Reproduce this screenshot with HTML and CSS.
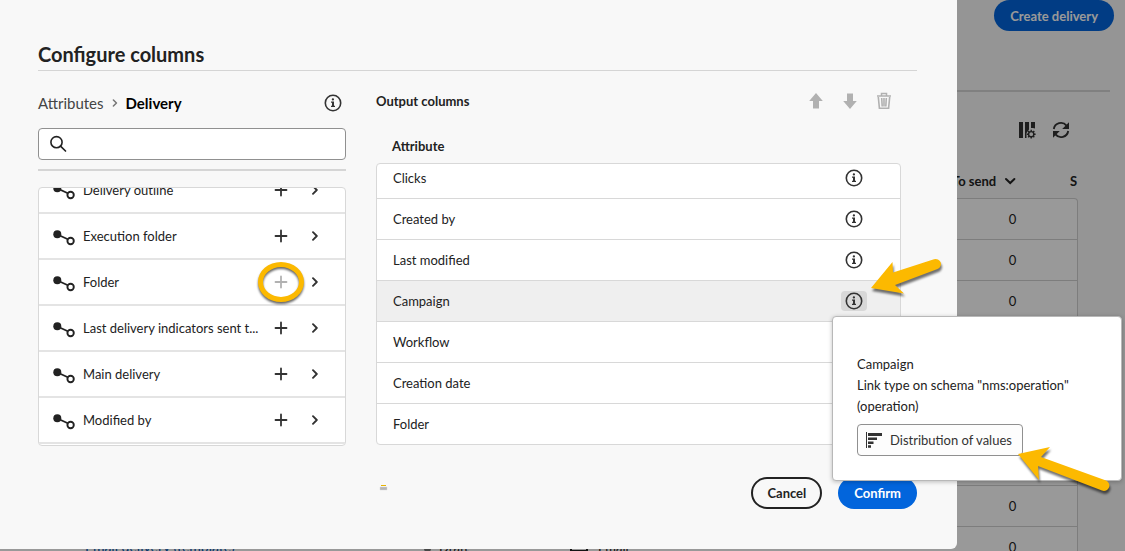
FILE: index.html
```
<!DOCTYPE html>
<html lang="en">
<head>
<meta charset="utf-8">
<title>Configure columns</title>
<meta name="viewport" content="width=device-width, initial-scale=1">
<link rel="stylesheet" href="styles.css">
</head>
<body>
<svg class="defs" aria-hidden="true">
  <symbol id="i-info" viewBox="0 0 18 18"><circle cx="9" cy="9" r="7.7" fill="none" stroke="currentColor" stroke-width="1.6"/><circle cx="8.9" cy="5.4" r="1.15" fill="currentColor"/><path d="M7 7.6h3v4.2h1v1.2H7v-1.2h1V8.800H7z" fill="currentColor"/></symbol>
  <symbol id="i-link" viewBox="0 0 22 16"><path d="M4.500 4.500 17.500 10.500" stroke="currentColor" stroke-width="1.8"/><circle cx="4.300" cy="4.300" r="4" fill="currentColor"/><circle cx="17.600" cy="11" r="3.200" fill="#fff" stroke="currentColor" stroke-width="1.900"/></symbol>
  <symbol id="i-plus" viewBox="0 0 14 14"><path d="M7 1.500v11M1.500 7h11" stroke="currentColor" stroke-width="1.800" stroke-linecap="round"/></symbol>
  <symbol id="i-chev" viewBox="0 0 10 10"><path d="M3 1.200 6.800 5 3 8.800" fill="none" stroke="currentColor" stroke-width="1.900" stroke-linecap="round" stroke-linejoin="round"/></symbol>
  <symbol id="i-up" viewBox="0 0 16 18"><path d="M8 1 14.800 9H11v7.500H5V9H1.200z" fill="currentColor"/></symbol>
</svg>

<div class="page">
  <header class="page-head"><button class="btn accent create">Create delivery</button></header>
  <hr class="page-rule">
  <div class="page-tools">
    <button class="icon-btn" aria-label="Configure columns"><svg width="18" height="18" viewBox="0 0 18 18"><path d="M1 1h4v16H1zM7 1h4v7.500L8.500 12v5H7zM13 1h4v6.500l-2-.5h-2z" fill="currentColor"/><circle cx="13.200" cy="13.200" r="2.600" fill="none" stroke="currentColor" stroke-width="1.400"/><path d="M13.200 8.800v1.800M13.200 15.800v1.800M8.800 13.200h1.800M15.800 13.200h1.800M10.100 10.100l1.200 1.200M15.100 15.100l1.200 1.200M10.100 16.300l1.200-1.200M15.100 11.300l1.200-1.200" stroke="currentColor" stroke-width="1.400"/></svg></button>
    <button class="icon-btn" aria-label="Refresh"><svg width="18" height="18" viewBox="0 0 18 18"><path d="M1.800 8A7.200 7.200 0 0 1 14.500 4.600M16.200 10A7.200 7.200 0 0 1 3.500 13.400" fill="none" stroke="currentColor" stroke-width="1.900"/><path d="M17 1.200V8h-6.800zM1 16.800V10h6.800z" fill="currentColor"/></svg></button>
  </div>
  <table class="grid">
    <thead><tr><th class="c-name"></th><th class="c-status"></th><th class="c-channel"></th><th class="c-send">To send <svg width="14" height="10" viewBox="0 0 14 10"><path d="M3 3l4.200 4L11.400 3" fill="none" stroke="currentColor" stroke-width="2" stroke-linecap="round"/></svg></th><th class="c-next">S</th></tr></thead>
    <tbody>
      <tr><td></td><td></td><td></td><td class="num">0</td></tr>
      <tr><td></td><td></td><td></td><td class="num">0</td></tr>
      <tr><td></td><td></td><td></td><td class="num">0</td></tr>
      <tr><td></td><td></td><td></td><td class="num"></td></tr>
      <tr><td></td><td></td><td></td><td class="num"></td></tr>
      <tr><td></td><td></td><td></td><td class="num"></td></tr>
      <tr><td></td><td></td><td></td><td class="num"></td></tr>
      <tr><td></td><td></td><td></td><td class="num">0</td></tr>
      <tr><td class="name"><a href="#">Email delivery (template)</a></td><td><span class="dot"></span>Draft</td><td><span class="mail"></span>Email</td><td class="num">0</td></tr>
    </tbody>
  </table>
</div>
<div class="backdrop"></div>

<section class="dialog" role="dialog" aria-labelledby="dlg-title">
  <h1 id="dlg-title">Configure columns</h1>
  <div class="cols">
    <div class="left">
      <div class="crumbs">
        <a href="#">Attributes</a>
        <svg class="sep" width="8" height="8"><use href="#i-chev"/></svg>
        <strong>Delivery</strong>
        <button class="icon-btn info" aria-label="Delivery information"><svg width="18" height="18"><use href="#i-info"/></svg></button>
      </div>
      <label class="search">
        <svg width="18" height="18" viewBox="0 0 18 18"><circle cx="7.500" cy="7.200" r="5.600" fill="none" stroke="currentColor" stroke-width="1.600"/><path d="M11.500 11.200 16.500 16" stroke="currentColor" stroke-width="1.700" stroke-linecap="round"/></svg>
        <input type="search" aria-label="Search attributes">
      </label>
      <hr class="left-rule">
      <div class="list">
        <ul>
          <li><svg class="link" width="22" height="16"><use href="#i-link"/></svg><span>Delivery outline</span><button class="icon-btn" aria-label="Add Delivery outline"><svg width="14" height="14"><use href="#i-plus"/></svg></button><button class="icon-btn" aria-label="Open Delivery outline"><svg width="10" height="10"><use href="#i-chev"/></svg></button></li>
          <li><svg class="link" width="22" height="16"><use href="#i-link"/></svg><span>Execution folder</span><button class="icon-btn" aria-label="Add Execution folder"><svg width="14" height="14"><use href="#i-plus"/></svg></button><button class="icon-btn" aria-label="Open Execution folder"><svg width="10" height="10"><use href="#i-chev"/></svg></button></li>
          <li><svg class="link" width="22" height="16"><use href="#i-link"/></svg><span>Folder</span><button class="icon-btn ringed" disabled aria-label="Add Folder"><svg width="14" height="14"><use href="#i-plus"/></svg></button><button class="icon-btn" aria-label="Open Folder"><svg width="10" height="10"><use href="#i-chev"/></svg></button></li>
          <li><svg class="link" width="22" height="16"><use href="#i-link"/></svg><span>Last delivery indicators sent t...</span><button class="icon-btn" aria-label="Add Last delivery indicators"><svg width="14" height="14"><use href="#i-plus"/></svg></button><button class="icon-btn" aria-label="Open Last delivery indicators"><svg width="10" height="10"><use href="#i-chev"/></svg></button></li>
          <li><svg class="link" width="22" height="16"><use href="#i-link"/></svg><span>Main delivery</span><button class="icon-btn" aria-label="Add Main delivery"><svg width="14" height="14"><use href="#i-plus"/></svg></button><button class="icon-btn" aria-label="Open Main delivery"><svg width="10" height="10"><use href="#i-chev"/></svg></button></li>
          <li><svg class="link" width="22" height="16"><use href="#i-link"/></svg><span>Modified by</span><button class="icon-btn" aria-label="Add Modified by"><svg width="14" height="14"><use href="#i-plus"/></svg></button><button class="icon-btn" aria-label="Open Modified by"><svg width="10" height="10"><use href="#i-chev"/></svg></button></li>
        </ul>
      </div>
    </div>

    <div class="right">
      <div class="right-head">
        <h2>Output columns</h2>
        <button class="icon-btn" disabled aria-label="Move up"><svg width="16" height="18"><use href="#i-up"/></svg></button>
        <button class="icon-btn" disabled aria-label="Move down"><svg class="flip" width="16" height="18"><use href="#i-up"/></svg></button>
        <button class="icon-btn" disabled aria-label="Delete"><svg width="16" height="18" viewBox="0 0 16 18"><path d="M1 4h14M5.500 3.500V1.500h5v2" fill="none" stroke="currentColor" stroke-width="1.500"/><path d="M2.300 5 3.400 16.200h9.200L13.700 5M5.700 6l.5 8.500M8 6v8.500M10.300 6l-.5 8.500" fill="none" stroke="currentColor" stroke-width="1.600"/></svg></button>
      </div>
      <h3 id="attr-head">Attribute</h3>
      <div class="out">
        <table aria-labelledby="attr-head">
          <tr><td>Clicks</td><td class="act"><button class="icon-btn" aria-label="Clicks information"><svg width="18" height="18"><use href="#i-info"/></svg></button></td></tr>
          <tr><td>Created by</td><td class="act"><button class="icon-btn" aria-label="Created by information"><svg width="18" height="18"><use href="#i-info"/></svg></button></td></tr>
          <tr><td>Last modified</td><td class="act"><button class="icon-btn" aria-label="Last modified information"><svg width="18" height="18"><use href="#i-info"/></svg></button></td></tr>
          <tr class="sel"><td>Campaign</td><td class="act"><button class="icon-btn on" aria-label="Campaign information"><svg width="18" height="18"><use href="#i-info"/></svg></button></td></tr>
          <tr><td>Workflow</td><td class="act"></td></tr>
          <tr><td>Creation date</td><td class="act"></td></tr>
          <tr><td>Folder</td><td class="act"></td></tr>
        </table>
      </div>
    </div>
  </div>
  <footer>
    <button class="btn outline">Cancel</button>
    <button class="btn accent">Confirm</button>
  </footer>

  <div class="popover">
    <p>Campaign<br>Link type on schema "nms:operation" (operation)</p>
    <button class="dist"><svg width="18" height="18" viewBox="0 0 18 18"><path d="M1.500 1v16" stroke="currentColor" stroke-width="1"/><path d="M3 2h14v3H3zM3 6.500h9v2.500H3zM3 10.500h5.500V13H3zM3 14.300h3v2.500H3z" fill="currentColor"/></svg>Distribution of values</button>
  </div>
  <svg class="arrow arrow-a" width="80" height="50" viewBox="0 0 80 50" aria-hidden="true"><path d="M4 34 25.500 8 26 18.500 67 5.200A5.200 5.200 0 0 1 70.500 15L28 31 37 39.500z"/></svg>
  <svg class="arrow arrow-b" width="106" height="56" viewBox="0 0 106 56" aria-hidden="true"><path d="M4 12 36 5 27 15 92 38.500A5.200 5.200 0 0 1 88 48.500L24 24 25 38z"/></svg>
  <span class="speck"></span>
</section>
</body>
</html>
```
FILE: styles.css
```
*, *::before, *::after { box-sizing: border-box; }
body {
  margin: 0;
  height: 100vh;
  overflow: hidden;
  position: relative;
  background: #f8f8f8;
  color: #222;
  font: 13px/20px Lato, "Noto Sans", sans-serif;
}
.defs { position: absolute; width: 0; height: 0; }
h1, h2, h3, p, ul { margin: 0; padding: 0; }
a { color: inherit; text-decoration: none; }
button { font: inherit; color: inherit; }
svg { display: block; }

.icon-btn {
  display: grid;
  place-items: center;
  padding: 0;
  border: 0;
  background: none;
  color: #333;
}
.icon-btn:disabled { color: #b1b1b1; }
.btn {
  height: 32px;
  padding: 0 16px;
  border: 0;
  border-radius: 16px;
  font-weight: 700;
}
.accent { background: #0265dc; color: #fff; }
.outline { padding: 0 14px; border: 2px solid #222; background: #f8f8f8; }

/* Page under the dialog */
.page-head { display: flex; justify-content: flex-end; padding: 0 11px 0 0; }
.create { height: 31px; }
.page-rule { height: 2px; margin: 59px 15px 0 0; border: 0; background: #d5d5d5; }
.page-tools {
  display: flex;
  justify-content: flex-end;
  gap: 16px;
  padding: 29px 55px 0 0;
}
.grid {
  width: calc(100% - 47px);
  margin-top: 25px;
  border-spacing: 0;
  table-layout: fixed;
}
.grid th { height: 34px; padding: 0; text-align: left; white-space: nowrap; font-weight: 700; }
.grid .c-send { width: 130px; padding-left: 4px; }
.grid th svg { display: inline-block; margin-left: 4px; }
.grid td {
  height: 41px;
  padding: 0;
  border-bottom: 1px solid #d0d0d0;
  background: #fff;
}
.grid tbody tr:first-child td { height: 42px; border-top: 1px solid #d0d0d0; }
.grid .num { border-right: 1px solid #d0d0d0; text-align: center; }
.grid tr:first-child .num { border-top-right-radius: 4px; }
.c-name { width: 424px; }
.c-status { width: 146px; }
.grid .c-next { width: 0; text-indent: -8px; }
.grid .name { padding-left: 85px; font-size: 14px; color: #0054b6; }
.dot { display: inline-block; width: 7px; height: 7px; margin-right: 8px; border-radius: 50%; background: #777; }
.mail { display: inline-block; width: 18px; height: 12px; margin-right: 10px; border: 2px solid #222; }
.backdrop { position: absolute; inset: 0; background: rgba(0, 0, 0, .4); }

/* Dialog */
.dialog {
  position: absolute;
  top: 0;
  left: 0;
  width: calc(100% - 168px);
  padding: 41px 40px 40px 38px;
  border-radius: 0 0 6px 0;
  background: #f8f8f8;
}
h1 {
  padding-bottom: 3px;
  border-bottom: 1px solid #d5d5d5;
  font-size: 20px;
  line-height: 26px;
}
.cols {
  display: grid;
  grid-template-columns: 308px 1fr;
  gap: 30px;
  padding: 20px 16px 0 0;
}
.crumbs { display: flex; align-items: center; height: 24px; font-size: 15px; color: #444; }
.sep { margin: 0 7px; color: #777; }
.crumbs strong { color: #000; }
.info { margin-left: auto; margin-right: 4px; }
.search {
  display: flex;
  align-items: center;
  gap: 8px;
  height: 32px;
  margin-top: 13px;
  padding: 0 10px;
  border: 1px solid #909090;
  border-radius: 4px;
  background: #fff;
}
.search input { flex: 1; min-width: 0; border: 0; outline: 0; background: none; font: inherit; }
.left-rule { height: 2px; margin: 9px 0 16px; border: 0; background: #d5d5d5; }
.list {
  height: 259px;
  overflow: hidden;
  border: 1px solid #d8d8d8;
  border-radius: 4px;
  background: #fff;
}
/* Scrolled part-way through the first row */
.list ul { margin-top: -20px; list-style: none; }
.list li {
  display: flex;
  align-items: center;
  height: 46px;
  padding: 0 20px 0 14px;
  border-bottom: 2px solid #e4e4e4;
}
.link { flex: none; margin: 3px 8px 0 0; }
.list span { flex: 1; white-space: nowrap; }
.list .icon-btn { width: 24px; height: 24px; }
.list .icon-btn + .icon-btn { width: 20px; margin-left: 12px; }
.list .ringed { position: relative; }
.ringed::after {
  content: "";
  position: absolute;
  left: -11px;
  top: -8px;
  width: 46px;
  height: 40px;
  border: 5px solid #fcb900;
  border-radius: 50%;
  filter: drop-shadow(0 2px 1px rgba(0, 0, 0, .6));
}

.right-head { display: flex; align-items: center; gap: 18px; height: 20px; padding-right: 9px; }
h2, h3 { font-size: 13px; font-weight: 700; line-height: 20px; }
h2 { flex: 1; }
.flip { transform: rotate(180deg); }
h3 { padding: 25px 0 7px 16px; }
.out {
  height: 282px;
  overflow: hidden;
  border: 1px solid #d8d8d8;
  border-radius: 4px;
  background: #fff;
}
.out table { width: 100%; margin-top: -6px; border-spacing: 0; }
.out td { height: 41px; padding: 0 0 0 16px; border-bottom: 1px solid #d8d8d8; }
.out .act { width: 59px; padding: 0; }
.out .icon-btn { width: 26px; height: 20px; border-radius: 4px; }
.out .on { background: #d8d8d8; }
.sel { background: #efefef; }
footer { display: flex; justify-content: flex-end; gap: 16px; padding-top: 31px; }

.popover {
  position: absolute;
  left: calc(100% - 125px);
  top: 316px;
  width: 290px;
  padding: 37px 24px 24px;
  border: 1px solid #b8b8b8;
  border-radius: 4px;
  background: #fff;
  box-shadow: 0 1px 4px rgba(0, 0, 0, .25);
}
.popover p { line-height: 21px; }
.dist {
  display: flex;
  align-items: center;
  gap: 7px;
  height: 32px;
  margin-top: 7px;
  padding: 0 10px 0 7px;
  border: 1px solid #909090;
  border-radius: 4px;
  background: #fdfdfd;
  color: #333;
  white-space: nowrap;
}
.arrow { position: absolute; fill: #fcb900; filter: drop-shadow(1px 3px 1px rgba(0, 0, 0, .55)); }
.arrow-a { left: calc(100% - 90px); top: 254px; }
.arrow-b { left: calc(100% + 57px); top: 442px; }
.speck {
  position: absolute;
  left: 381px;
  top: 485px;
  width: 5px;
  height: 1px;
  background: #e8b400;
  box-shadow: 0 3px 1px 1px #b5b5b5;
}
```
